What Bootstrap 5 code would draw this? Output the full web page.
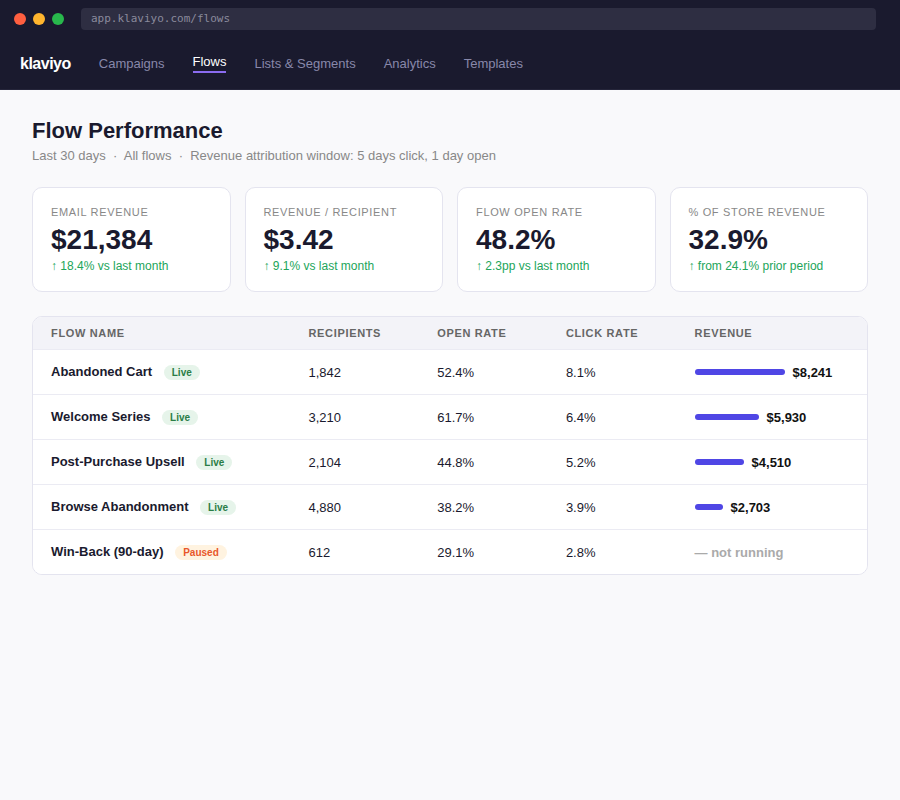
<!DOCTYPE html>
<html lang="en">
<head>
<meta charset="utf-8">
<title>Flow Performance</title>
<link href="https://cdn.jsdelivr.net/npm/bootstrap@5.3.0/dist/css/bootstrap.min.css" rel="stylesheet">
<style>
body{font-family:"Liberation Sans",Arial,sans-serif;background:#f9f9fb;color:#1a1a2e;min-height:800px;}
.topchrome{background:#1a1a2e;height:38px;padding:0 14px;gap:7px;}
.dot{width:12px;height:12px;border-radius:50%;}
.dot-r{background:#ff5f40;}.dot-y{background:#ffb52e;}.dot-g{background:#28b84c;}
.urlbar{margin-left:10px;background:#2e2e42;color:#8a8a9c;border-radius:4px;height:22px;width:795px;padding-left:10px;font:11px/22px "DejaVu Sans Mono",monospace;}
.mainnav{background:#1a1a2e;height:52px;padding:0 20px;border-bottom:1px solid #25253a;}
.brand{color:#fff;font-weight:700;font-size:16px;letter-spacing:-.5px;margin-right:28px;}
.navitem{color:#8888aa;font-size:13px;margin-right:28px;text-decoration:none;line-height:15px;}
.navitem.on{color:#fff;border-bottom:2px solid #8b6cf0;padding-bottom:2px;margin-top:-1px;}
.pagebody{padding:28px 32px;}
.pagetitle{font-size:22px;font-weight:700;margin:0 0 4px;line-height:26px;}
.subline{font-size:13px;color:#888;line-height:15px;margin-bottom:24px;}
.statrow{gap:14px;}
.statbox{background:#fff;border:1px solid #e4e4ef;border-radius:10px;padding:18px;height:105px;flex:1 1 0;min-width:0;}
.statlabel{font-size:11px;letter-spacing:.66px;color:#888;text-transform:uppercase;line-height:13px;margin-bottom:5px;}
.statvalue{font-size:28px;font-weight:700;line-height:32px;margin-bottom:3px;}
.statdelta{font-size:12px;color:#22a55a;line-height:14px;}
.tablewrap{margin-top:24px;background:#fff;border:1px solid #e4e4ef;border-radius:10px;overflow:hidden;}
.flowtable{table-layout:fixed;width:100%;margin:0;border-collapse:collapse;}
.flowtable th{background:#f3f3f8;font-size:11px;font-weight:700;letter-spacing:.66px;color:#666;text-transform:uppercase;height:32px;padding:1px 18px 0;border-bottom:1px solid #ebebf3;line-height:13px;}
.flowtable td{height:45px;padding:2px 18px 0;font-size:13px;color:#1a1a2e;border-bottom:1px solid #ebebf3;background:#fff;vertical-align:middle;}
.flowtable tr:last-child td{border-bottom:0;padding-top:1px;}
.flowname{font-weight:700;position:relative;top:-1px;}
.pill{display:inline-block;font-size:10px;font-weight:700;line-height:15px;padding:0 8px;border-radius:999px;margin-left:8px;position:relative;top:-1px;}
.pill-live{background:#e6f4ea;color:#2a7d46;}
.pill-paused{background:#fff3e0;color:#e8572a;}
.barcell{display:flex;align-items:center;gap:8px;font-weight:700;color:#111;}
.revbar{height:6px;border-radius:3px;background:#4f46e5;margin-bottom:2px;}
.idle{color:#aaa;font-weight:700;}
</style>
</head>
<body>
<div class="topchrome d-flex align-items-center">
  <span class="dot dot-r"></span><span class="dot dot-y"></span><span class="dot dot-g"></span>
  <div class="urlbar">app.klaviyo.com/flows</div>
</div>
<nav class="mainnav d-flex align-items-center">
  <span class="brand">klaviyo</span>
  <a class="navitem" href="#">Campaigns</a>
  <a class="navitem on" href="#">Flows</a>
  <a class="navitem" href="#">Lists &amp; Segments</a>
  <a class="navitem" href="#">Analytics</a>
  <a class="navitem" href="#">Templates</a>
</nav>
<main class="pagebody">
  <h1 class="pagetitle">Flow Performance</h1>
  <div class="subline">Last 30 days &nbsp;·&nbsp; All flows &nbsp;·&nbsp; Revenue attribution window: 5 days click, 1 day open</div>
  <div class="d-flex statrow">
    <div class="statbox"><div class="statlabel">Email Revenue</div><div class="statvalue">$21,384</div><div class="statdelta">↑ 18.4% vs last month</div></div>
    <div class="statbox"><div class="statlabel">Revenue / Recipient</div><div class="statvalue">$3.42</div><div class="statdelta">↑ 9.1% vs last month</div></div>
    <div class="statbox"><div class="statlabel">Flow Open Rate</div><div class="statvalue">48.2%</div><div class="statdelta">↑ 2.3pp vs last month</div></div>
    <div class="statbox"><div class="statlabel">% of Store Revenue</div><div class="statvalue">32.9%</div><div class="statdelta">↑ from 24.1% prior period</div></div>
  </div>
  <div class="tablewrap">
    <table class="flowtable">
      <colgroup><col style="width:257.5px"><col style="width:128.7px"><col style="width:128.7px"><col style="width:128.7px"><col></colgroup>
      <thead><tr><th>Flow Name</th><th>Recipients</th><th>Open Rate</th><th>Click Rate</th><th>Revenue</th></tr></thead>
      <tbody>
        <tr><td><span class="flowname">Abandoned Cart</span> <span class="pill pill-live">Live</span></td><td>1,842</td><td>52.4%</td><td>8.1%</td><td><div class="barcell"><div class="revbar" style="width:90px"></div>$8,241</div></td></tr>
        <tr><td><span class="flowname">Welcome Series</span> <span class="pill pill-live">Live</span></td><td>3,210</td><td>61.7%</td><td>6.4%</td><td><div class="barcell"><div class="revbar" style="width:64px"></div>$5,930</div></td></tr>
        <tr><td><span class="flowname">Post-Purchase Upsell</span> <span class="pill pill-live">Live</span></td><td>2,104</td><td>44.8%</td><td>5.2%</td><td><div class="barcell"><div class="revbar" style="width:49px"></div>$4,510</div></td></tr>
        <tr><td><span class="flowname">Browse Abandonment</span> <span class="pill pill-live">Live</span></td><td>4,880</td><td>38.2%</td><td>3.9%</td><td><div class="barcell"><div class="revbar" style="width:28px"></div>$2,703</div></td></tr>
        <tr><td><span class="flowname">Win-Back (90-day)</span> <span class="pill pill-paused">Paused</span></td><td>612</td><td>29.1%</td><td>2.8%</td><td><span class="idle">— not running</span></td></tr>
      </tbody>
    </table>
  </div>
</main>
</body>
</html>
